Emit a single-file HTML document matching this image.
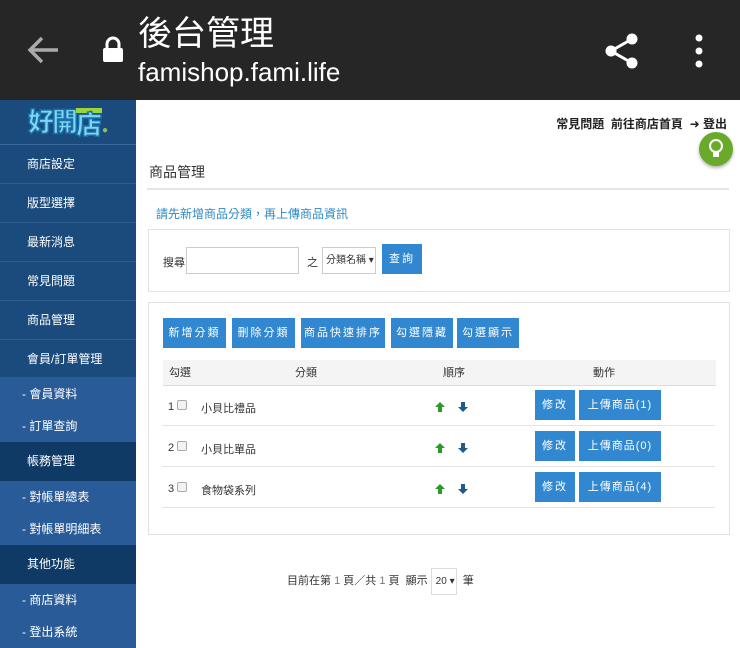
<!DOCTYPE html>
<html><head><meta charset="utf-8"><style>
*{box-sizing:border-box;margin:0;padding:0}
body{width:740px;height:648px;overflow:hidden;background:#fff;font-family:"Liberation Sans","Noto Sans CJK TC",sans-serif;position:relative;color:#333}
.top{position:absolute;left:0;top:0;width:740px;height:100px;background:#262626;color:#fff}
.t1{position:absolute;left:138px;top:14px;font-size:34px;line-height:40px}
.t2{position:absolute;left:138px;top:56px;font-size:26px;line-height:32px}
.side{position:absolute;left:0;top:100px;width:136px;height:548px;background:#1b4a7c}
.logo{height:45px;border-bottom:1px solid #3b6aa0;display:flex;align-items:center;justify-content:center}
.it{height:39px;line-height:38px;padding-left:27px;color:#fff;font-size:12px;border-bottom:1px solid #2f5d8f}
.sub{height:32px;line-height:32px;padding-left:22px;color:#fff;font-size:12px;background:#285b98}
.hd{background:#0f3a66;border-bottom:none}
.main{position:absolute;left:136px;top:100px;width:604px;height:548px}
.btn{display:inline-block;background:#3188d0;color:#fff;font-size:11px;letter-spacing:2px;text-align:center;position:absolute}
.panel{position:absolute;border:1px solid #e2e2e2;background:#fff}
</style></head><body>
<div class="top">
<svg style="position:absolute;left:26px;top:36px" width="34" height="28" viewBox="0 0 34 28"><path d="M16 2 L4 14 L16 26 M4 14 H32" stroke="#aaa" stroke-width="3.5" fill="none"/></svg>
<svg style="position:absolute;left:102px;top:36px" width="22" height="28" viewBox="0 0 22 28"><path d="M5 12 V8 a6 6 0 0 1 12 0 V12" stroke="#fff" stroke-width="3" fill="none"/><rect x="1" y="12" width="20" height="14" rx="2" fill="#fff"/></svg>
<div class="t1">後台管理</div>
<div class="t2">famishop.fami.life</div>
<svg style="position:absolute;left:604px;top:32px" width="36" height="38" viewBox="0 0 36 38"><circle cx="28" cy="7" r="5.5" fill="#fff"/><circle cx="7" cy="19" r="5.5" fill="#fff"/><circle cx="28" cy="31" r="5.5" fill="#fff"/><path d="M28 7 L7 19 L28 31" stroke="#fff" stroke-width="3" fill="none"/></svg>
<svg style="position:absolute;left:694px;top:34px" width="10" height="34"><circle cx="5" cy="4" r="3.5" fill="#fff"/><circle cx="5" cy="17" r="3.5" fill="#fff"/><circle cx="5" cy="30" r="3.5" fill="#fff"/></svg>
</div>
<div class="side">
<div class="logo"><span style="font-size:26px;font-weight:900;color:#7fd6f2;-webkit-text-stroke:1.5px #1a6fa8;letter-spacing:-2px;line-height:30px">好開</span><span style="font-size:26px;font-weight:900;color:#7fd6f2;-webkit-text-stroke:1.5px #1a6fa8;line-height:24px;border-top:5px solid #9ed43a">店</span><span style="color:#8bc34a;font-size:10px;margin-top:16px">●</span></div>
<div class="it">商店設定</div><div class="it">版型選擇</div><div class="it">最新消息</div><div class="it">常見問題</div><div class="it">商品管理</div><div class="it" style="height:38px">會員/訂單管理</div>
<div class="sub">- 會員資料</div><div class="sub">- 訂單查詢</div>
<div class="it hd">帳務管理</div>
<div class="sub">- 對帳單總表</div><div class="sub">- 對帳單明細表</div>
<div class="it hd">其他功能</div>
<div class="sub">- 商店資料</div><div class="sub">- 登出系統</div>
</div>
<div class="main">
<div style="position:absolute;right:13px;top:15px;font-size:12px;font-weight:bold;color:#222">常見問題&nbsp; 前往商店首頁&nbsp; <span style="font-weight:normal">➜</span> 登出</div>
<div style="position:absolute;left:563px;top:32px;width:34px;height:34px;border-radius:50%;background:#6aaa2a;box-shadow:0 2px 3px rgba(0,0,0,.3)"><svg width="34" height="34"><circle cx="17" cy="14" r="6" stroke="#fff" stroke-width="2" fill="none"/><rect x="14" y="20" width="6" height="5" fill="#fff"/></svg></div>
<div style="position:absolute;left:13px;top:62px;font-size:14px;color:#333">商品管理</div>
<div style="position:absolute;left:11px;top:88px;width:582px;border-top:2px solid #e6e6e6"></div>
<div style="position:absolute;left:20px;top:105px;font-size:12px;color:#2f8ac0">請先新增商品分類，再上傳商品資訊</div>
<div class="panel" style="left:12px;top:129px;width:582px;height:63px">
<span style="position:absolute;left:14px;top:24px;font-size:11px">搜尋</span>
<div style="position:absolute;left:37px;top:17px;width:113px;height:27px;border:1px solid #ccc"></div>
<span style="position:absolute;left:158px;top:24px;font-size:11px">之</span>
<div style="position:absolute;left:173px;top:17px;width:54px;height:27px;border:1px solid #ccc;font-size:10px;line-height:25px;padding-left:3px">分類名稱 ▾</div>
<div class="btn" style="left:233px;top:14px;width:40px;height:30px;line-height:30px">查詢</div>
</div>
<div class="panel" style="left:12px;top:202px;width:582px;height:233px">
<div class="btn" style="left:14px;top:15px;width:63px;height:30px;line-height:30px">新增分類</div>
<div class="btn" style="left:83px;top:15px;width:63px;height:30px;line-height:30px">刪除分類</div>
<div class="btn" style="left:152px;top:15px;width:84px;height:30px;line-height:30px">商品快速排序</div>
<div class="btn" style="left:242px;top:15px;width:62px;height:30px;line-height:30px">勾選隱藏</div>
<div class="btn" style="left:308px;top:15px;width:62px;height:30px;line-height:30px">勾選顯示</div>
<div style="position:absolute;left:14px;top:57px;width:553px;height:26px;background:#f4f4f4;border-bottom:1px solid #ddd;font-size:11px;line-height:26px">
<span style="position:absolute;left:6px">勾選</span><span style="position:absolute;left:132px">分類</span><span style="position:absolute;left:280px">順序</span><span style="position:absolute;left:430px">動作</span></div>
</div>
<div style="position:absolute;left:151px;top:468px;font-size:11px;color:#333;line-height:27px">目前在第 <span style="color:#777">1</span> 頁／共 <span style="color:#777">1</span> 頁&nbsp; 顯示 <span style="display:inline-block;border:1px solid #ddd;width:26px;height:27px;line-height:25px;font-size:10px;padding-left:4px">20 ▾</span>&nbsp; 筆</div>
</div>
<div style="position:absolute;left:162px;top:385px;width:553px;height:41px;border-bottom:1px solid #e4e4e4"></div>
<div style="position:absolute;left:162px;top:426px;width:553px;height:41px;border-bottom:1px solid #e4e4e4"></div>
<div style="position:absolute;left:162px;top:467px;width:553px;height:41px;border-bottom:1px solid #e4e4e4"></div>
<div style="font-size:11px">
<span style="position:absolute;left:168px;top:400px">1 <span style="display:inline-block;width:10px;height:10px;border:1px solid #aaa;border-radius:2px;background:#f2f2f2"></span></span>
<span style="position:absolute;left:201px;top:400px">小貝比禮品</span>
<span style="position:absolute;left:168px;top:441px">2 <span style="display:inline-block;width:10px;height:10px;border:1px solid #aaa;border-radius:2px;background:#f2f2f2"></span></span>
<span style="position:absolute;left:201px;top:441px">小貝比單品</span>
<span style="position:absolute;left:168px;top:482px">3 <span style="display:inline-block;width:10px;height:10px;border:1px solid #aaa;border-radius:2px;background:#f2f2f2"></span></span>
<span style="position:absolute;left:201px;top:482px">食物袋系列</span>
</div>
<svg style="position:absolute;left:435px;top:401px" width="35" height="100">
<g id="a"><path d="M5 1 L10 6 H7 V11 H3 V6 H0 Z" fill="#2a9a2a"/><path d="M28 11 L33 6 H30 V1 H26 V6 H23 Z" fill="#1f5a8a"/></g>
<use href="#a" y="41"/><use href="#a" y="82"/>
</svg>
<div class="btn" style="left:535px;top:390px;width:40px;height:30px;line-height:30px">修改</div>
<div class="btn" style="left:579px;top:390px;width:82px;height:30px;line-height:30px;letter-spacing:1px">上傳商品(1)</div>
<div class="btn" style="left:535px;top:431px;width:40px;height:30px;line-height:30px">修改</div>
<div class="btn" style="left:579px;top:431px;width:82px;height:30px;line-height:30px;letter-spacing:1px">上傳商品(0)</div>
<div class="btn" style="left:535px;top:472px;width:40px;height:30px;line-height:30px">修改</div>
<div class="btn" style="left:579px;top:472px;width:82px;height:30px;line-height:30px;letter-spacing:1px">上傳商品(4)</div>
</body></html>
